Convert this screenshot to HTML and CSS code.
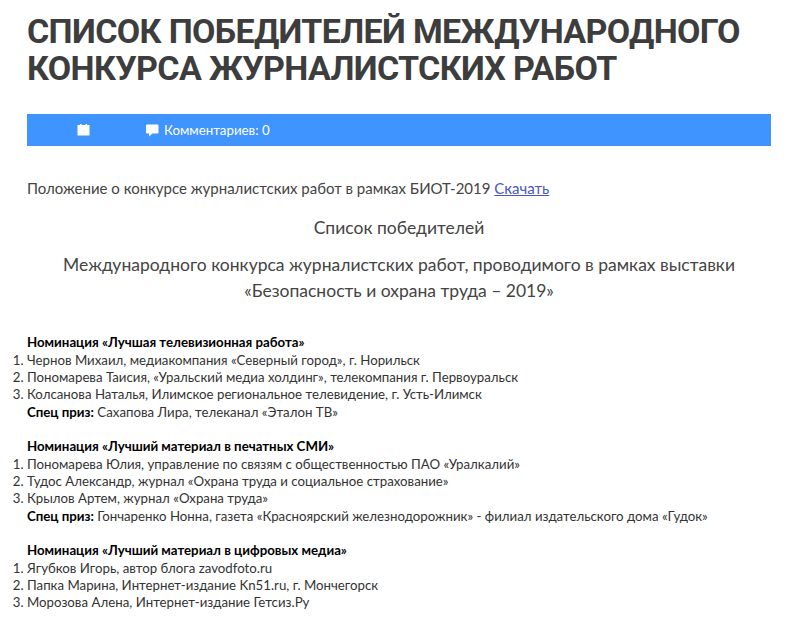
FILE: index.html
```html
<!DOCTYPE html>
<html lang="ru">
<head>
<meta charset="utf-8">
<title>Список победителей</title>
<link rel="stylesheet" href="styles.css">
</head>
<body>
<div class="page">
<h1 class="title">Список победителей международного конкурса журналистских работ</h1>
<div class="meta">
  <span class="meta-date"><svg class="ico" width="13" height="13" viewBox="0 0 13 13"><path fill="#fff" d="M.5 1h2.5V0h1.5v1h4V0H10v1h2.5v10.5H.5z"/></svg></span>
  <span class="meta-comments"><svg class="ico" width="14" height="14" viewBox="0 0 14 14"><path fill="#fff" d="M2 1.5h10.5a1 1 0 0 1 1 1v7a1 1 0 0 1-1 1H7.5L4 13.5v-3H2a1 1 0 0 1-1-1v-7a1 1 0 0 1 1-1z"/></svg>Комментариев: 0</span>
</div>
<p class="lead">Положение о конкурсе журналистских работ в рамках БИОТ-2019 <a href="#">Скачать</a></p>
<p class="center">Список победителей</p>
<p class="center second">Международного конкурса журналистских работ, проводимого в рамках выставки<br>«Безопасность и охрана труда – 2019»</p>
<div class="list">
<p><b>Номинация «Лучшая телевизионная работа»</b></p>
<ol>
<li>Чернов Михаил, медиакомпания «Северный город», г. Норильск</li>
<li>Пономарева Таисия, «Уральский медиа холдинг», телекомпания г. Первоуральск</li>
<li>Колсанова Наталья, Илимское региональное телевидение, г. Усть-Илимск</li>
</ol>
<p><b>Спец приз:</b> Сахапова Лира, телеканал «Эталон ТВ»</p>
<p class="gap"><b>Номинация «Лучший материал в печатных СМИ»</b></p>
<ol>
<li>Пономарева Юлия, управление по связям с общественностью ПАО «Уралкалий»</li>
<li>Тудос Александр, журнал «Охрана труда и социальное страхование»</li>
<li>Крылов Артем, журнал «Охрана труда»</li>
</ol>
<p><b>Спец приз:</b> Гончаренко Нонна, газета «Красноярский железнодорожник» - филиал издательского дома «Гудок»</p>
<p class="gap"><b>Номинация «Лучший материал в цифровых медиа»</b></p>
<ol>
<li>Ягубков Игорь, автор блога zavodfoto.ru</li>
<li>Папка Марина, Интернет-издание Kn51.ru, г. Мончегорск</li>
<li>Морозова Алена, Интернет-издание Гетсиз.Ру</li>
</ol>
</div>
</div>
</body>
</html>
```
FILE: styles.css
```css
html, body { margin: 0; background: #fff; }
body { font-family: Lato, sans-serif; color: #444; overflow: hidden; height: 625px; }
.page { padding: 0 32px 0 27px; }
.title { margin: 0; padding-top: 13px; font-family: Roboto, sans-serif; font-size: 34px; letter-spacing: -0.65px; line-height: 37px; font-weight: 700; color: #3d3d3d; text-transform: uppercase; }
.meta { margin-top: 27px; height: 32px; background: #3f94ff; color: #fff; display: flex; align-items: center; font-size: 13.3px; }
.meta-date { margin-left: 50px; width: 68px; display: flex; }
.meta-comments { display: flex; align-items: center; gap: 5px; }
.lead { margin: 30px 0 0; font-size: 15px; line-height: 24px; }
.center { margin: 15px 0 0; text-align: center; font-size: 17.5px; line-height: 26px; }
.center.second { margin-top: 11px; }
.list { margin-top: 30.4px; font-size: 13.25px; line-height: 17.33px; color: #333; }
.list b { color: #000; }
.list p { margin: 0; }
.list p.gap { margin-top: 17.33px; }
.list ol { margin: 0 0 0 -27px; padding: 0 0 0 27px; }
a { color: #4a55c8; }
```
